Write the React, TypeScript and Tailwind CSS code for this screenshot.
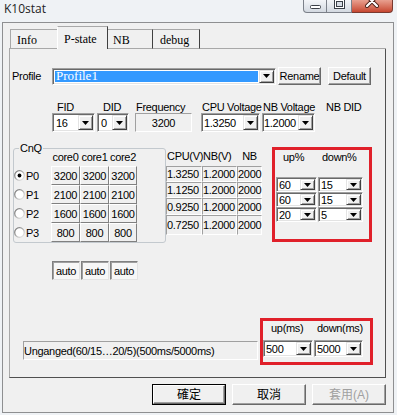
import React from 'react';

const Arrow = () => (
  <svg width="7" height="4" viewBox="0 0 7 4">
    <path d="M0 0h7L3.5 4z" fill="#000" />
  </svg>
);

function DropBtn() {
  return (
    <span className="w-[15px] my-[1px] mr-[1px] flex items-center justify-center bg-[#f0f0f0] border border-t-[#e3e3e3] border-l-[#e3e3e3] border-r-[#404040] border-b-[#404040] shadow-[inset_1px_1px_0_#fff,inset_-1px_-1px_0_#a0a0a0]">
      <Arrow />
    </span>
  );
}

function Combo({ value, className = '', pad = 'pl-[3px]' }: { value: string; className?: string; pad?: string }) {
  return (
    <div className={`flex bg-white border border-t-[#a0a0a0] border-l-[#a0a0a0] border-r-white border-b-white shadow-[inset_1px_1px_0_#696969,inset_-1px_-1px_0_#e3e3e3] ${className}`}>
      <span className={`flex-1 flex items-center overflow-hidden whitespace-nowrap ${pad}`}>{value}</span>
      <DropBtn />
    </div>
  );
}

function Btn({ children, className = '' }: { children: React.ReactNode; className?: string }) {
  return (
    <div className={`flex items-center justify-center bg-[#f0f0f0] border border-t-white border-l-white border-r-[#696969] border-b-[#696969] shadow-[inset_-1px_-1px_0_#a0a0a0] ${className}`}>
      {children}
    </div>
  );
}

function Radio({ on }: { on?: boolean }) {
  return (
    <svg width="11" height="11" viewBox="0 0 11 11">
      <defs>
        <linearGradient id="rg" x1="0" y1="0" x2="1" y2="1">
          <stop offset="0" stopColor="#6a6a6a" />
          <stop offset="1" stopColor="#f4f4f4" />
        </linearGradient>
      </defs>
      <circle cx="5.5" cy="5.5" r="4.8" fill="#fff" stroke="url(#rg)" strokeWidth="1.3" />
      {on && <circle cx="5.5" cy="5.5" r="1.9" fill="#000" />}
    </svg>
  );
}

const raised = 'border border-t-white border-l-white border-r-[#808080] border-b-[#808080]';
const sunken = 'border border-t-[#a0a0a0] border-l-[#a0a0a0] border-r-white border-b-white';

const pRows = [
  { p: 'P0', f: '3200', cpu: '1.3250', h: 'h-[16px]', on: true },
  { p: 'P1', f: '2100', cpu: '1.1250', h: 'h-[16px]' },
  { p: 'P2', f: '1600', cpu: '0.9250', h: 'h-[17px]' },
  { p: 'P3', f: '800', cpu: '0.7250', h: 'h-[20px]' },
];

const updown = [
  ['60', '15'],
  ['60', '15'],
  ['20', '5'],
];

export default function App() {
  return (
    <div className="w-[397px] h-[415px] overflow-hidden bg-[#eff2f5] font-['Liberation_Sans',sans-serif] text-[11px] leading-[12px] tracking-[-0.3px] text-black">
      {/* title bar */}
      <div className="h-[22px] flex items-start">
        <span className="ml-[4px] mt-[1px] font-['Open_Sans',sans-serif] text-[12px] leading-[16px] tracking-normal text-[#1e1e1e]">K10stat</span>
        <div className="ml-auto mr-[4px] flex">
          <div className="w-[24px] h-[13px] border border-t-0 border-[#7b8089] rounded-bl-[4px] bg-gradient-to-b from-[#f3f5f8] to-[#d3d9e1] flex justify-center">
            <svg width="11" height="12" viewBox="0 0 11 12"><rect x="0.5" y="5.5" width="10" height="3" rx="1" fill="#fff" stroke="#3a3f47" /></svg>
          </div>
          <div className="w-[25px] h-[13px] border border-t-0 border-l-0 border-[#7b8089] bg-gradient-to-b from-[#f3f5f8] to-[#d3d9e1] flex justify-center">
            <svg width="11" height="12" viewBox="0 0 11 12"><rect x="0.5" y="-1.5" width="10" height="10" fill="#fff" stroke="#3a3f47" /><rect x="2.5" y="1.5" width="6" height="5" fill="#d6dce4" stroke="#3a3f47" /></svg>
          </div>
          <div className="w-[41px] h-[13px] border border-t-0 border-l-0 border-[#7a3a30] rounded-br-[4px] bg-gradient-to-b from-[#e8a090] to-[#c64630] flex justify-center">
            <svg width="14" height="12" viewBox="0 0 14 12"><path d="M2 -4L12 6M12 -4L2 6" stroke="#4a2018" strokeWidth="4" strokeLinecap="round" /><path d="M2 -4L12 6M12 -4L2 6" stroke="#fff" strokeWidth="2.2" strokeLinecap="round" /></svg>
          </div>
        </div>
      </div>

      {/* client */}
      <div className="ml-[2px] w-[392px] h-[391px] border border-[#8e8f91] bg-[#f0f0f0] flex flex-col">
        {/* tabs */}
        <div className="ml-[6px] mt-[3px] w-[377px] h-[23px] flex items-end font-['Liberation_Serif',serif] text-[12px] leading-[14px] tracking-normal">
          <div className="w-[1px] h-full border-b border-[#a8a8a8]" />
          <div className="w-[47px] h-[20px] border-t border-l border-b border-t-[#a8a8a8] border-l-[#a8a8a8] border-b-[#a8a8a8] pl-[6px] pt-[3px]">Info</div>
          <div className="w-[51px] h-[23px] border-t border-l border-r border-t-[#a8a8a8] border-l-white border-r-[#404040] pl-[6px] pt-[5px]">P-state</div>
          <div className="w-[45px] h-[20px] border-t border-r border-b border-t-[#a8a8a8] border-r-[#404040] border-b-[#a8a8a8] pl-[5px] pt-[3px]">NB</div>
          <div className="w-[47px] h-[20px] border-t border-r border-b border-t-[#a8a8a8] border-r-[#404040] border-b-[#a8a8a8] pl-[7px] pt-[3px]">debug</div>
          <div className="flex-1 h-full border-b border-[#a8a8a8]" />
        </div>

        {/* pane */}
        <div className="ml-[6px] w-[377px] h-[329px] border-l border-r border-b border-l-[#a8a8a8] border-r-[#505050] border-b-[#505050] flex flex-col">
          {/* profile */}
          <div className="mt-[18px] h-[18px] flex items-center">
            <span className="w-[42px] pl-[2px]">Profile</span>
            <div className="w-[224px] h-[17px] flex bg-white border border-t-[#a0a0a0] border-l-[#a0a0a0] border-r-white border-b-white shadow-[inset_1px_1px_0_#696969,inset_-1px_-1px_0_#e3e3e3]">
              <span className="flex-1 m-[2px] mr-[1px] bg-[#3399ff] text-white flex items-center pl-[1px] font-['Liberation_Serif',serif] text-[13px] tracking-normal">Profile1</span>
              <DropBtn />
            </div>
            <Btn className="ml-[2px] w-[43px] h-[18px]">Rename</Btn>
            <Btn className="ml-[7px] w-[43px] h-[18px]">Default</Btn>
          </div>

          {/* labels */}
          <div className="mt-[16px] h-[12px] flex whitespace-nowrap">
            <span className="ml-[47px] w-[46px]">FID</span>
            <span className="w-[33px]">DID</span>
            <span className="w-[66px]">Frequency</span>
            <span className="w-[61px]">CPU Voltage</span>
            <span className="w-[63px]">NB Voltage</span>
            <span>NB DID</span>
          </div>

          {/* combos */}
          <div className="h-[19px] flex">
            <Combo value="16" className="ml-[42px] w-[43px] h-[19px]" />
            <Combo value="0" className="ml-[2px] w-[32px] h-[19px]" />
            <div className={`ml-[6px] w-[57px] h-[19px] flex items-center justify-center ${sunken}`}>3200</div>
            <Combo value="1.3250" pad="pl-[2px]" className="ml-[9px] w-[59px] h-[19px]" />
            <Combo value="1.2000" pad="pl-[1px]" className="ml-[2px] w-[53px] h-[19px]" />
          </div>

          {/* CnQ + table + up/down */}
          <div className="mt-[10px] flex items-start">
            <div className="ml-[3px] mt-[6px] w-[153px] border border-[#c3c9ce] rounded-[3px] flex flex-col">
              <span className="-mt-[7px] ml-[5px] w-fit px-[1px] bg-[#f0f0f0]">CnQ</span>
              <div className="-mt-[3px] ml-[37px] flex">
                <span className="w-[29px] text-center">core0</span>
                <span className="w-[29px] text-center">core1</span>
                <span className="w-[28px] text-center">core2</span>
              </div>
              <div className="mt-[3px] flex flex-col">
                {pRows.map((r) => (
                  <div key={r.p} className="h-[19px] flex items-center">
                    <div className="w-[37px] flex items-center">
                      <Radio on={r.on} />
                      <span className="ml-[1px]">{r.p}</span>
                    </div>
                    <div className={`w-[29px] h-full flex items-center justify-center ${raised}`}>{r.f}</div>
                    <div className={`w-[29px] h-full flex items-center justify-center ${raised}`}>{r.f}</div>
                    <div className={`w-[28px] h-full flex items-center justify-center ${raised}`}>{r.f}</div>
                  </div>
                ))}
              </div>
            </div>

            <div className="mt-[8px] flex flex-col">
              <div className="h-[12px] flex">
                <span className="w-[36px] pl-[1px]">CPU(V)</span>
                <span className="w-[35px] pl-[1px]">NB(V)</span>
                <span className="w-[25px] text-center">NB</span>
              </div>
              <div className="mt-[4px] flex flex-col">
                {pRows.map((r) => (
                  <div key={r.p} className={`${r.h} flex`}>
                    <div className={`w-[36px] flex items-center ${sunken}`}>{r.cpu}</div>
                    <div className={`w-[35px] flex items-center ${sunken}`}>1.2000</div>
                    <div className={`w-[25px] flex items-center ${sunken}`}>2000</div>
                  </div>
                ))}
              </div>
            </div>

            <div className="ml-[10px] mt-[5px] w-[100px] h-[95px] border-[3px] border-[#e0202a] flex flex-col">
              <div className="mt-[1px] h-[12px] flex">
                <span className="ml-[8px] w-[39px]">up%</span>
                <span>down%</span>
              </div>
              <div className="mt-[14px] flex flex-col">
                {updown.map(([u, d], i) => (
                  <div key={i} className="h-[15px] flex">
                    <Combo value={u} pad="pl-[2px]" className="ml-[1px] w-[41px] h-[15px]" />
                    <Combo value={d} pad="pl-[2px]" className="ml-[1px] w-[45px] h-[15px]" />
                  </div>
                ))}
              </div>
            </div>
          </div>

          {/* auto */}
          <div className="mt-[18px] ml-[42px] flex gap-[1px]">
            {['auto', 'auto', 'auto'].map((a, i) => (
              <div key={i} className="w-[28px] h-[19px] flex items-center justify-center bg-[#f7f7f7] border border-t-[#808080] border-l-[#808080] border-r-[#e3e3e3] border-b-[#e3e3e3] shadow-[inset_1px_1px_0_#a0a0a0]">{a}</div>
            ))}
          </div>

          {/* unganged + ms */}
          <div className="mt-[38px] flex items-start">
            <div className={`ml-[13px] mt-[23px] w-[235px] h-[19px] flex items-center whitespace-nowrap ${sunken}`}>Unganged(60/15…20/5)(500ms/5000ms)</div>
            <div className="ml-[2px] w-[113px] h-[47px] border-[3px] border-[#e0202a] flex flex-col">
              <div className="mt-[1px] h-[12px] flex">
                <span className="ml-[8px] w-[46px]">up(ms)</span>
                <span>down(ms)</span>
              </div>
              <div className="mt-[6px] flex">
                <Combo value="500" pad="pl-[2px]" className="w-[50px] h-[17px]" />
                <Combo value="5000" pad="pl-[2px]" className="ml-[1px] w-[49px] h-[17px]" />
              </div>
            </div>
          </div>
        </div>

        {/* dialog buttons */}
        <div className="mt-[6px] flex font-['Liberation_Sans','Noto_Sans_CJK_TC',sans-serif] text-[12px] tracking-normal">
          <div className="ml-[149px] border border-black">
            <Btn className="w-[72px] h-[19px]">確定</Btn>
          </div>
          <Btn className="ml-[6px] w-[74px] h-[21px]">取消</Btn>
          <Btn className="ml-[6px] w-[74px] h-[21px] text-[#a0a0a0]">套用(A)</Btn>
        </div>
      </div>
    </div>
  );
}
